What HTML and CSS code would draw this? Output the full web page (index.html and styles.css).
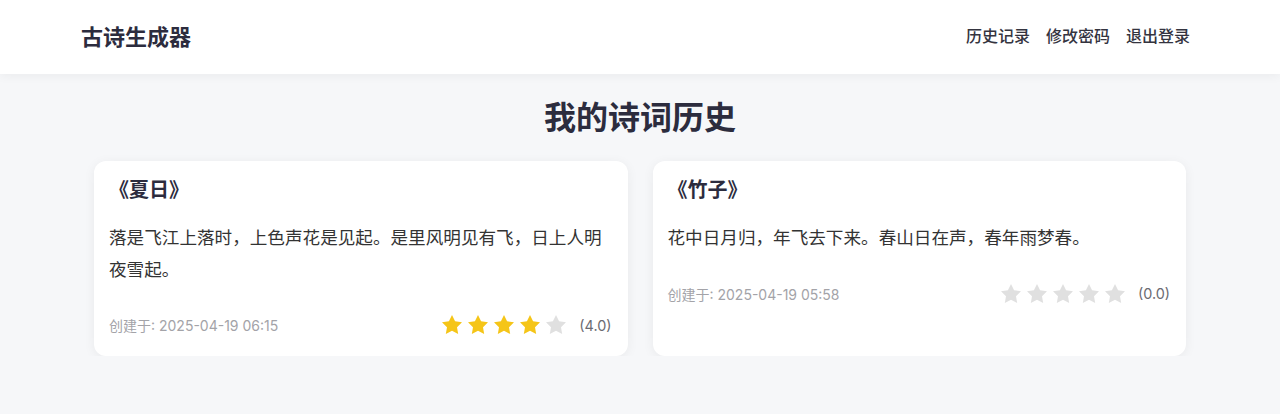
FILE: index.html
```html
<!DOCTYPE html>
<html lang="zh-CN">
<head>
<meta charset="utf-8">
<title>古诗生成器 - 我的诗词历史</title>
<link rel="stylesheet" href="styles.css">
</head>
<body>
<header class="topbar">
  <div class="topbar-inner">
    <div class="logo">古诗生成器</div>
    <nav class="nav">
      <a class="nav-link" href="#">历史记录</a>
      <a class="nav-link" href="#">修改密码</a>
      <a class="nav-link" href="#">退出登录</a>
    </nav>
  </div>
</header>
<main class="main">
  <h1 class="page-title">我的诗词历史</h1>
  <div class="grid">
    <article class="card">
      <h2 class="card-title">《夏日》</h2>
      <p class="card-text">落是飞江上落时，上色声花是见起。是里风明见有飞，日上人明夜雪起。</p>
      <div class="card-footer">
        <span class="date">创建于: 2025-04-19 06:15</span>
        <div class="rating">
          <svg class="star on" viewBox="0 0 24 24"><path d="M12 2l3.09 6.26L22 9.27l-5 4.87 1.18 6.88L12 17.770l-6.18 3.25L7 14.14 2 9.27l6.91-1.01L12 2z"/></svg>
          <svg class="star on" viewBox="0 0 24 24"><path d="M12 2l3.09 6.26L22 9.27l-5 4.87 1.18 6.88L12 17.77l-6.18 3.25L7 14.14 2 9.27l6.91-1.01L12 2z"/></svg>
          <svg class="star on" viewBox="0 0 24 24"><path d="M12 2l3.09 6.26L22 9.27l-5 4.87 1.18 6.88L12 17.77l-6.18 3.25L7 14.14 2 9.27l6.91-1.01L12 2z"/></svg>
          <svg class="star on" viewBox="0 0 24 24"><path d="M12 2l3.09 6.26L22 9.27l-5 4.87 1.18 6.88L12 17.77l-6.18 3.25L7 14.14 2 9.27l6.91-1.01L12 2z"/></svg>
          <svg class="star" viewBox="0 0 24 24"><path d="M12 2l3.09 6.26L22 9.27l-5 4.87 1.18 6.88L12 17.77l-6.18 3.25L7 14.14 2 9.27l6.91-1.01L12 2z"/></svg>
          <span class="score">(4.0)</span>
        </div>
      </div>
    </article>
    <article class="card">
      <h2 class="card-title">《竹子》</h2>
      <p class="card-text">花中日月归，年飞去下来。春山日在声，春年雨梦春。</p>
      <div class="card-footer">
        <span class="date">创建于: 2025-04-19 05:58</span>
        <div class="rating">
          <svg class="star" viewBox="0 0 24 24"><path d="M12 2l3.09 6.26L22 9.27l-5 4.87 1.18 6.88L12 17.77l-6.18 3.25L7 14.14 2 9.27l6.91-1.01L12 2z"/></svg>
          <svg class="star" viewBox="0 0 24 24"><path d="M12 2l3.09 6.26L22 9.27l-5 4.87 1.18 6.88L12 17.77l-6.18 3.25L7 14.14 2 9.27l6.91-1.01L12 2z"/></svg>
          <svg class="star" viewBox="0 0 24 24"><path d="M12 2l3.09 6.26L22 9.27l-5 4.87 1.18 6.88L12 17.77l-6.18 3.25L7 14.14 2 9.27l6.91-1.01L12 2z"/></svg>
          <svg class="star" viewBox="0 0 24 24"><path d="M12 2l3.09 6.26L22 9.27l-5 4.87 1.18 6.88L12 17.77l-6.18 3.25L7 14.14 2 9.27l6.91-1.01L12 2z"/></svg>
          <svg class="star" viewBox="0 0 24 24"><path d="M12 2l3.09 6.26L22 9.27l-5 4.87 1.18 6.88L12 17.77l-6.18 3.25L7 14.14 2 9.27l6.91-1.01L12 2z"/></svg>
          <span class="score">(0.0)</span>
        </div>
      </div>
    </article>
  </div>
</main>
</body>
</html>
```
FILE: styles.css
```css
* { box-sizing: border-box; }

html, body {
  margin: 0;
  padding: 0;
}

body {
  background: #f6f7f9;
  font-family: "Inter", "Noto Sans CJK SC", sans-serif;
  color: #333;
}

.topbar {
  background: #fff;
  box-shadow: 0 2px 10px rgba(0, 0, 0, 0.05);
  position: relative;
  z-index: 1;
}

.topbar-inner {
  height: 74px;
  padding: 0 82px 5px 80px;
  display: flex;
  align-items: center;
  justify-content: space-between;
}

.logo {
  font-size: 22px;
  font-weight: 700;
  color: #2c2c3e;
  margin-left: 1px;
}

.nav {
  display: flex;
  align-items: center;
}

.nav-link {
  font-size: 16px;
  font-weight: 500;
  color: #34343f;
  text-decoration: none;
  padding: 0 8px;
}

.main {
  padding-top: 25px;
}

.page-title {
  margin: 0 0 24px;
  text-align: center;
  font-size: 32px;
  line-height: 38px;
  font-weight: 700;
  color: #2c2c3e;
}

.grid {
  width: 1092px;
  margin: 0 auto;
  display: grid;
  grid-template-columns: 1fr 1fr;
  gap: 25px;
}

.card {
  background: #fff;
  border-radius: 12px;
  box-shadow: 0 2px 12px rgba(0, 0, 0, 0.06);
  padding: 17px 16px 19px 15px;
}

.card-title {
  margin: 0 0 20px;
  font-size: 20px;
  line-height: 24px;
  font-weight: 700;
  color: #2c2c3e;
}

.card-text {
  margin: 0;
  font-size: 17.6px;
  line-height: 1.8;
  color: #333;
}

.card-footer {
  margin-top: 28px;
  height: 24px;
  display: flex;
  align-items: center;
  justify-content: space-between;
}

.date {
  font-size: 14px;
  color: #a3a3a8;
}

.rating {
  display: flex;
  align-items: center;
  gap: 2px;
}

.star {
  width: 24px;
  height: 24px;
  fill: #e0e0e0;
}

.star.on {
  fill: #f5c518;
}

.score {
  margin-left: 9px;
  font-size: 14.4px;
  color: #6b6b72;
}
```
